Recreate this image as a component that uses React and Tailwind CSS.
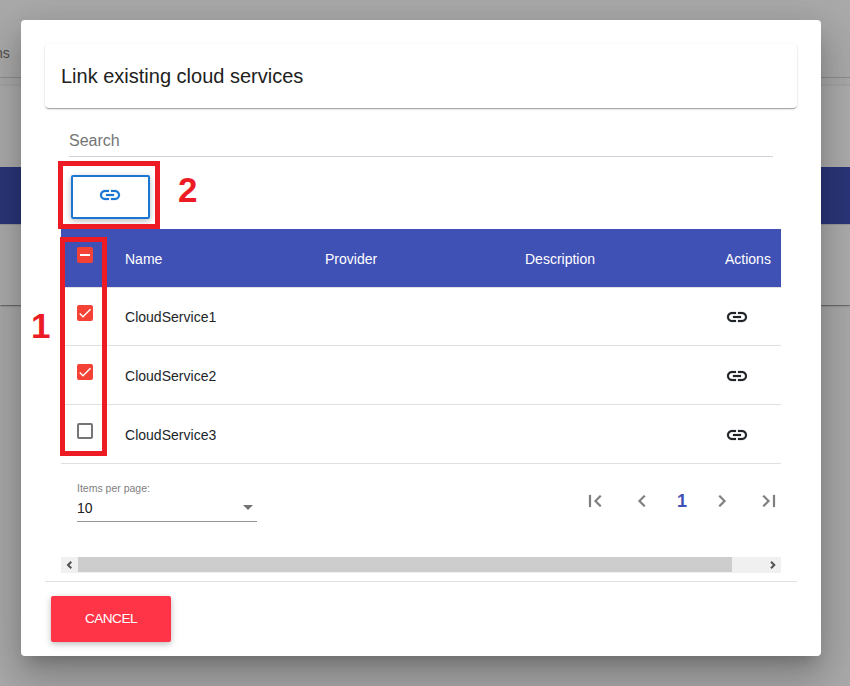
import React from "react";

const LINK =
  "M3.9 12c0-1.71 1.39-3.1 3.1-3.1h4V7H7c-2.76 0-5 2.24-5 5s2.24 5 5 5h4v-1.9H7c-1.71 0-3.1-1.39-3.1-3.1zM8 13h8v-2H8v2zm9-6h-4v1.9h4c1.71 0 3.1 1.39 3.1 3.1s-1.39 3.1-3.1 3.1h-4V17h4c2.76 0 5-2.24 5-5s-2.24-5-5-5z";
const FIRST = "M18.41 16.59L13.82 12l4.59-4.59L17 6l-6 6 6 6zM6 6h2v12H6z";
const PREV = "M15.41 7.41L14 6l-6 6 6 6 1.41-1.41L10.83 12z";
const NEXT = "M10 6L8.59 7.41 13.17 12l-4.58 4.59L10 18l6-6z";
const LAST = "M5.59 7.41L10.18 12l-4.59 4.59L7 18l6-6-6-6zM16 6h2v12h-2z";

function Icon({ d, className = "" }) {
  return (
    <svg viewBox="0 0 24 24" className={`size-6 shrink-0 fill-current stroke-current ${className}`} strokeWidth="0.2">
      <path d={d} />
    </svg>
  );
}

function Checkbox({ state }) {
  if (state === "off") {
    return <span className="block size-4 rounded-xs border-2 border-[#757575]" />;
  }
  return (
    <span className="flex size-4 items-center justify-center rounded-xs bg-[#f44336]">
      {state === "mixed" ? (
        <span className="h-0.5 w-2.5 bg-white" />
      ) : (
        <svg viewBox="0 0 24 24" className="size-4 fill-none stroke-white" strokeWidth="2.13">
          <path d="M4.1,12.7 9,17.6 20.3,6.3" />
        </svg>
      )}
    </span>
  );
}

function Row({ name, checked, height }) {
  return (
    <div className={`flex items-end border-b border-[#e0e0e0] text-[14px] leading-[57px] text-[#212529] ${height}`}>
      <div className="h-[57px] w-16 pt-[17px] pl-4">
        <Checkbox state={checked ? "on" : "off"} />
      </div>
      <div className="h-[57px] w-[600px] pt-px tracking-[0.02px]">{name}</div>
      <div className="h-[57px] pt-[17px]">
        <Icon d={LINK} />
      </div>
    </div>
  );
}

function Backdrop() {
  return (
    <div className="absolute inset-0 flex flex-col bg-[#aaaaaa]">
      <div className="h-[77px] pt-[43px] text-[14px] leading-[20px] text-[#4a4a4a]">
        <span className="-ml-[5px]">ns</span>
      </div>
      <div className="h-px bg-[#8e8e8e]" />
      <div className="h-[7px]" />
      <div className="h-[220px] border-t border-[#a3a3a3] bg-[#adadad] shadow-[0_2px_1px_-1px_rgba(0,0,0,0.2),0_1px_1px_0_rgba(0,0,0,0.14),0_1px_3px_0_rgba(0,0,0,0.12)]">
        <div className="mt-[81px] h-[57px] bg-[#2b367a]" />
        <div className="h-px bg-[#989898]" />
      </div>
    </div>
  );
}

export default function App() {
  return (
    <div className="relative h-[686px] w-[850px] overflow-hidden font-['Liberation_Sans',Arial,sans-serif]">
      <Backdrop />
      <div className="relative mt-5 ml-[21px] flex h-[636px] w-[800px] flex-col rounded bg-white px-6 pt-6 shadow-[0_11px_15px_-7px_rgba(0,0,0,0.2),0_24px_38px_3px_rgba(0,0,0,0.14),0_9px_46px_8px_rgba(0,0,0,0.12)]">
        <div className="flex h-16 shrink-0 items-center rounded px-4 text-[20px] text-[#212121] shadow-[0_2px_1px_-1px_rgba(0,0,0,0.2),0_1px_1px_0_rgba(0,0,0,0.14),0_1px_3px_0_rgba(0,0,0,0.12)]">
          Link existing cloud services
        </div>

        <div className="mx-6 h-[49px] shrink-0 border-b border-[#ced4da] pt-[21px] text-[16px] leading-6 text-[#757575]">
          Search
        </div>

        <div className="h-[72px] shrink-0 pt-[18px] pl-[26px]">
          <button className="flex h-11 w-[79px] justify-center rounded-xs border-2 border-[#1976d2] pt-1.5 pr-px text-[#1976d2] shadow-[0_2px_5px_0_rgba(0,0,0,0.16),0_2px_10px_0_rgba(0,0,0,0.12)]">
            <Icon d={LINK} />
          </button>
        </div>

        <div className="mx-4 shrink-0">
          <div className="flex h-[59px] border-b border-[#e0e0e0] bg-[#3f51b5] text-[14px] leading-[60px] text-white">
            <div className="w-16 pt-[18px] pl-4">
              <Checkbox state="mixed" />
            </div>
            <div className="w-50">Name</div>
            <div className="w-50">Provider</div>
            <div className="w-50">Description</div>
            <div>Actions</div>
          </div>
          <Row name="CloudService1" checked height="h-[58px]" />
          <Row name="CloudService2" checked height="h-[59px]" />
          <Row name="CloudService3" height="h-[59px]" />

          <div className="flex h-[93px] justify-between">
            <div className="mt-[17px] ml-4 h-[41px] w-[180px] border-b border-[#949494]">
              <div className="text-[10.5px] leading-[14px] text-[#808080]">Items per page:</div>
              <div className="mt-[5px] flex items-center justify-between pr-1 text-[14px] leading-4 text-[#212121]">
                <span>10</span>
                <span className="-mt-px border-x-5 border-t-5 border-x-transparent border-t-[#757575]" />
              </div>
            </div>
            <div className="mt-[25px] flex h-6 items-center text-[#808080]">
              <Icon d={FIRST} />
              <Icon d={PREV} className="ml-[23px]" />
              <span className="w-14 text-center text-[18px] font-bold text-[#3f51b5]">1</span>
              <Icon d={NEXT} />
              <Icon d={LAST} className="ml-[23px]" />
            </div>
          </div>

          <div className="flex h-4 bg-[#f0f0f0] text-[#505050]">
            <div className="flex w-[17px] justify-center pt-[3.5px] pr-0.5">
              <svg viewBox="0 0 6 8" className="h-2 w-1.5 fill-none stroke-current" strokeWidth="2">
                <path d="M5.3 .7 2 4 5.3 7.3" />
              </svg>
            </div>
            <div className="h-[15px] w-[654px] bg-[#cdcdcd]" />
            <div className="flex flex-1 justify-end pt-[3.5px] pr-[5px]">
              <svg viewBox="0 0 6 8" className="h-2 w-1.5 fill-none stroke-current" strokeWidth="2">
                <path d="M1 .7 4.3 4 1 7.3" />
              </svg>
            </div>
          </div>
        </div>

        <div className="mt-2 shrink-0 border-t border-[#e0e0e0] pt-3.5 pl-1.5">
          <button className="flex h-[46px] w-[120px] items-center justify-center rounded-xs bg-[#ff3547] text-[13.6px] tracking-[-0.5px] text-white shadow-[0_2px_5px_0_rgba(0,0,0,0.16),0_2px_10px_0_rgba(0,0,0,0.12)]">
            CANCEL
          </button>
        </div>
      </div>

      <div className="absolute top-[161px] left-[58px] h-[68px] w-[102px] border-5 border-[#ed1c24]" />
      <div className="absolute top-[237px] left-[60px] h-[219px] w-[47px] border-5 border-[#ed1c24]" />
      <div className="absolute top-[170px] left-[178px] text-[35px] leading-10 font-bold text-[#ed1c24]">2</div>
      <div className="absolute top-[306px] left-[31px] text-[35px] leading-10 font-bold text-[#ed1c24]">1</div>
    </div>
  );
}
